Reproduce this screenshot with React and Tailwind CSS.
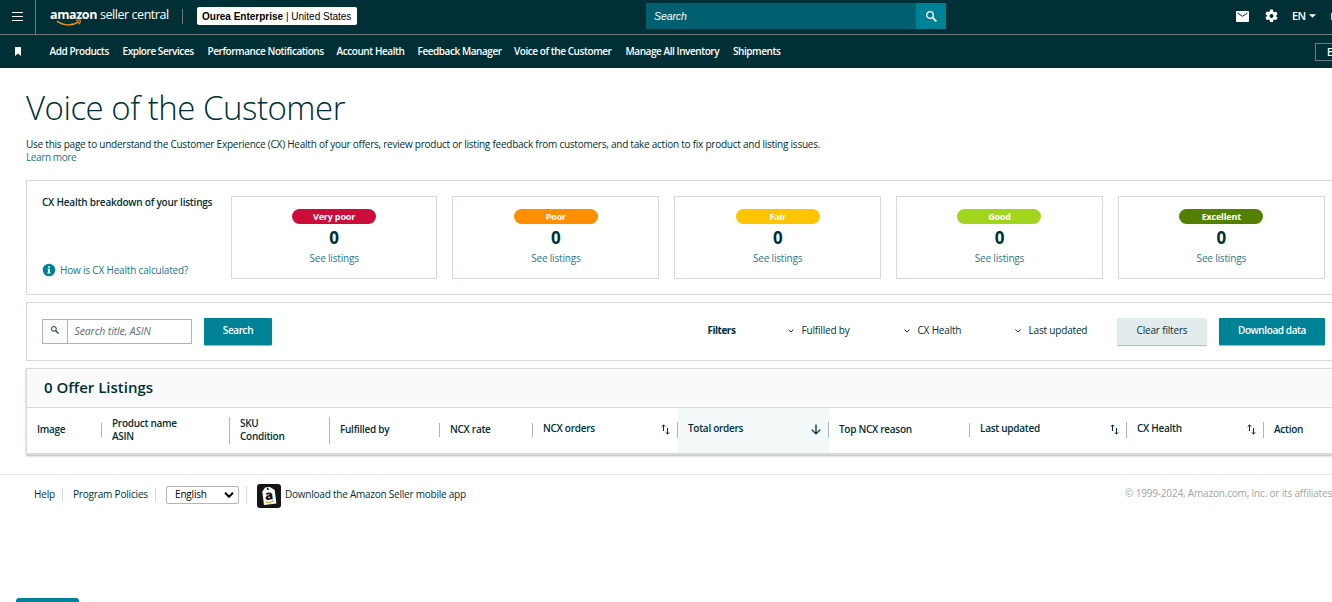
import clsx from 'clsx';

const NAV_ITEMS = [
  { label: 'Add Products', width: 'w-[60px]' },
  { label: 'Explore Services', width: 'w-[72px]' },
  { label: 'Performance Notifications', width: 'w-[116px]' },
  { label: 'Account Health', width: 'w-[68px]' },
  { label: 'Feedback Manager', width: 'w-[83.5px]' },
  { label: 'Voice of the Customer', width: 'w-[98.5px]' },
  { label: 'Manage All Inventory', width: 'w-[94.5px]' },
  { label: 'Shipments', width: 'w-[48px]' },
];

const HEALTH = [
  { label: 'Very poor', color: 'bg-[#cc0c39]' },
  { label: 'Poor', color: 'bg-[#ff8f00]' },
  { label: 'Fair', color: 'bg-[#ffc400]' },
  { label: 'Good', color: 'bg-[#a2d61e]' },
  { label: 'Excellent', color: 'bg-[#538000]' },
];

const COLUMNS = [
  { lines: ['Image'], width: 'w-[75px]' },
  { lines: ['Product name', 'ASIN'], width: 'w-[128px]' },
  { lines: ['SKU', 'Condition'], width: 'w-[100px]' },
  { lines: ['Fulfilled by'], width: 'w-[110px]' },
  { lines: ['NCX rate'], width: 'w-[93px]' },
  { lines: ['NCX orders'], width: 'w-[145px]', sort: 'both' },
  { lines: ['Total orders'], width: 'w-[151px]', sort: 'down' },
  { lines: ['Top NCX reason'], width: 'w-[141px]' },
  { lines: ['Last updated'], width: 'w-[157px]', sort: 'both' },
  { lines: ['CX Health'], width: 'w-[137px]', sort: 'both' },
  { lines: ['Action'], width: 'w-[77px]' },
];

export default function App() {
  return (
    <div className="h-[602px] w-[1332px] overflow-hidden bg-white font-['Open_Sans',sans-serif] text-[10px] tracking-[-0.18px] text-[#002f36]">
      <TopBar />
      <NavBar />
      <main className="w-[1341px] pl-[26px]">
        <h1 className="pt-[18px] text-[33px] leading-[44px] font-light tracking-[-0.48px] whitespace-nowrap">
          Voice of the Customer
        </h1>
        <p className="mt-[8px] leading-[13px] tracking-[-0.24px] whitespace-nowrap">
          Use this page to understand the Customer Experience (CX) Health of your offers, review product or listing
          feedback from customers, and take action to fix product and listing issues.
        </p>
        <a className="block leading-[13px] tracking-[-0.4px] text-[#1c7686]">Learn more</a>
        <HealthPanel />
        <FilterPanel />
        <ListingsTable />
      </main>
      <Footer />
    </div>
  );
}

function TopBar() {
  return (
    <header className="flex h-[35px] border-b border-[#6c7c80] bg-[#002f36] text-white">
      <div className="flex w-9 shrink-0 items-center border-r border-[#6c7c80] pb-px pl-3">
        <svg width="11" height="9" viewBox="0 0 11 9" stroke="currentColor" strokeWidth="1">
          <path d="M0 .5h11M0 4.5h11M0 8.5h11" />
        </svg>
      </div>
      <div className="relative ml-[14px] h-full w-[132px] shrink-0 whitespace-nowrap">
        <span className="text-[12.5px] leading-[29px] font-bold tracking-[-0.4px]">amazon</span>
        <span className="ml-[3px] text-[12.5px] leading-[29px] font-normal tracking-[-0.45px]">seller central</span>
        <svg className="absolute top-[19px] left-[6px]" width="26" height="8" viewBox="0 0 26 8" fill="none" stroke="#f19220">
          <path d="M1 2.2C7 6.8 16 7.2 23 2.8" strokeWidth="1.5" />
          <path d="M20 1.6c2-.6 4-.6 4.3 0 .2.7-.4 2.4-1.5 3.7" strokeWidth="1.1" />
        </svg>
      </div>
      <div className="mt-[9px] h-[15px] w-px shrink-0 bg-[#6c7c80]" />
      <div className="mt-[7px] ml-[14px] h-[18px] w-[160px] shrink-0 rounded-[2px] bg-white pl-[5px] font-['Liberation_Sans',sans-serif] text-[10px] leading-[19px] tracking-normal whitespace-nowrap text-black">
        <b>Ourea Enterprise</b> | United States
      </div>
      <div className="mt-[3px] ml-[289px] flex h-[26px] w-[300px] shrink-0">
        <div className="flex-1 bg-[#00606f] pl-2 font-['Liberation_Sans',sans-serif] text-[10.5px] leading-[27px] tracking-[-0.1px] italic">
          Search
        </div>
        <div className="flex w-[30px] items-center justify-center bg-[#008296]">
          <SearchIcon size={11} />
        </div>
      </div>
      <div className="ml-[290px] flex h-8 shrink-0 items-center">
        <svg width="13" height="11" viewBox="0 0 13 11" fill="none">
          <rect width="13" height="11" rx="1" fill="#fff" />
          <path d="M1.5 2l5 3.3 5-3.3" stroke="#002f36" />
        </svg>
        <svg className="ml-4" width="13" height="14" viewBox="2 2 20 20" fill="currentColor">
          <path d="M19.14 12.94c.04-.3.06-.61.06-.94s-.02-.64-.07-.94l2.03-1.58a.5.5 0 0 0 .12-.61l-1.92-3.32a.49.49 0 0 0-.59-.22l-2.39.96a7 7 0 0 0-1.62-.94l-.36-2.54A.48.48 0 0 0 13.92 2h-3.84a.48.48 0 0 0-.47.41l-.36 2.54c-.59.24-1.13.57-1.62.94l-2.39-.96a.48.48 0 0 0-.59.22L2.74 8.47a.48.48 0 0 0 .12.61l2.03 1.58c-.05.3-.09.63-.09.94s.02.64.07.94l-2.03 1.58a.5.5 0 0 0-.12.61l1.92 3.32c.12.22.37.29.59.22l2.39-.96c.5.38 1.03.7 1.62.94l.36 2.54c.05.24.24.41.48.41h3.84c.24 0 .44-.17.47-.41l.36-2.54a6.6 6.6 0 0 0 1.62-.94l2.39.96c.22.08.47 0 .59-.22l1.92-3.32a.48.48 0 0 0-.12-.61zM12 15a3 3 0 1 1 0-6 3 3 0 0 1 0 6z" />
        </svg>
        <span className="ml-[14px] w-[14px] pt-px text-[11px] font-semibold tracking-[-0.6px]">EN</span>
        <svg className="ml-[3px]" width="7" height="4" viewBox="0 0 6 3" fill="currentColor">
          <path d="M0 0h6L3 3z" />
        </svg>
        <div className="ml-[15px] h-[7px] w-[2px] shrink-0 bg-[#8fe1f0]" />
      </div>
    </header>
  );
}

function NavBar() {
  return (
    <nav className="flex h-[33px] items-center bg-[#002f36] text-[10px] font-semibold text-white">
      <svg className="ml-[15px]" width="6" height="9" viewBox="0 0 6 9" fill="currentColor">
        <path d="M0 0h6v9L3 6.6 0 9z" />
      </svg>
      <div className="ml-[28.5px] flex gap-[13px]">
        {NAV_ITEMS.map(({ label, width }) => (
          <span key={label} className={clsx('tracking-[-0.44px] whitespace-nowrap', width)}>
            {label}
          </span>
        ))}
      </div>
      <div className="ml-auto h-[18px] w-[17px] overflow-hidden border border-r-0 border-[#6c7c80] pl-[11px] leading-4">
        E
      </div>
    </nav>
  );
}

function SearchIcon({ size }) {
  return (
    <svg width={size} height={size} viewBox="0 0 11 11" fill="none" stroke="currentColor">
      <circle cx="4" cy="4" r="3.3" strokeWidth="1.3" />
      <path d="M6.4 6.4l4 4" strokeWidth="1.6" />
    </svg>
  );
}

function HealthPanel() {
  return (
    <section className="mt-4 flex h-[115px] border border-[#d5dbdb] pt-[15px] pl-[15px]">
      <div className="flex h-[83px] w-[188.7px] shrink-0 flex-col justify-between">
        <span className="leading-[13px] font-semibold tracking-[-0.22px] whitespace-nowrap">
          CX Health breakdown of your listings
        </span>
        <div className="flex h-[18px] items-center text-[#1c7686]">
          <svg width="14" height="14" viewBox="0 0 14 14">
            <circle cx="7" cy="7" r="6.3" fill="#008296" />
            <path d="M6.1 3.2h1.8v1.6H6.1zM5.5 5.8h2.4v3.6h.7v1H5.4v-1h.7V6.8h-.6z" fill="#fff" />
          </svg>
          <span className="ml-1 tracking-[-0.18px] whitespace-nowrap">How is CX Health calculated?</span>
        </div>
      </div>
      <div className="flex shrink-0 gap-[15px]">
        {HEALTH.map(({ label, color }) => (
          <div key={label} className="flex h-[83px] w-[206.8px] flex-col items-center border border-[#d5dbdb] pt-3">
            <span className={clsx('h-[15px] w-[84px] rounded-full text-center text-[9px] leading-[15px] font-bold text-white', color)}>
              {label}
            </span>
            <span className="mt-[3px] text-[17px] leading-[22px] font-bold">0</span>
            <a className="mt-[3px] leading-[13px] text-[#2b7a8c]">See listings</a>
          </div>
        ))}
      </div>
    </section>
  );
}

function FilterPanel() {
  return (
    <section className="mt-[7px] flex h-[59px] border border-[#d5dbdb] pt-[15px] pl-[15px]">
      <div className="mt-px flex h-[25px] w-[150px] border border-[#aab7b8]">
        <div className="flex w-[25px] items-center justify-center border-r border-[#aab7b8] bg-[#fafafa] pr-px pb-1">
          <SearchIcon size={8} />
        </div>
        <span className="pl-[6.5px] text-[10.5px] leading-[23px] tracking-[-0.12px] text-[#5a6b70] italic">
          Search title, ASIN
        </span>
      </div>
      <button className="ml-3 h-[27px] w-[68px] rounded-[1px] bg-[#008296] pb-[2px] font-semibold tracking-[-0.4px] text-white shadow-[0_1px_1px_#9fb4b8]">
        Search
      </button>
      <div className="ml-[435px] flex h-[25px] items-center whitespace-nowrap">
        <span className="w-[81px] pl-[0.5px] font-bold tracking-[-0.5px]">Filters</span>
        <Filter label="Fulfilled by" width="w-[116px]" />
        <Filter label="CX Health" width="w-[111px]" />
        <Filter label="Last updated" width="w-[102px]" />
      </div>
      <button className="h-[27px] w-[90px] rounded-[1px] bg-[#e3eced] pb-[2px] shadow-[0_1px_1px_#aab7b8]">
        Clear filters
      </button>
      <button className="ml-3 h-[27px] w-[106px] rounded-[1px] bg-[#008296] pb-[2px] font-semibold tracking-[-0.4px] text-white shadow-[0_1px_1px_#9fb4b8]">
        Download data
      </button>
    </section>
  );
}

function Filter({ label, width }) {
  return (
    <div className={clsx('flex items-center', width)}>
      <svg width="6" height="4" viewBox="0 0 6 4" fill="none" stroke="currentColor">
        <path d="M.4.5L3 3.1 5.6.5" />
      </svg>
      <span className="ml-[7.5px]">{label}</span>
    </div>
  );
}

function ListingsTable() {
  return (
    <section className="mt-[7px] h-[87px] border border-[#d5dbdb] border-b-2 shadow-[0_1px_2px_#aab7b8]">
      <h2 className="h-[39px] border-b border-[#d5dbdb] bg-[#fafafa] pl-[17px] text-[15px] leading-[36px] font-semibold tracking-normal">
        0 Offer Listings
      </h2>
      <div className="flex h-[45px] font-semibold">
        {COLUMNS.map(({ lines, width, sort }) => (
          <div
            key={lines[0]}
            className={clsx('flex shrink-0 items-center pl-[10px]', width, sort === 'down' && 'bg-[#f3f8f9]')}
          >
            <div
              className={clsx('flex-1 leading-[13px] tracking-[-0.28px] whitespace-nowrap', sort ? 'pb-[4px]' : 'pb-[2px]')}
            >
              {lines.map((line) => (
                <div key={line}>{line}</div>
              ))}
            </div>
            {sort === 'both' && <SortIcon />}
            {sort === 'down' && <DownIcon />}
            {lines[0] !== 'Action' && (
              <div
                className={clsx('mb-px w-px bg-[#aab7b8]', lines.length > 1 ? 'h-[27px]' : sort ? 'h-4' : 'h-[14px]')}
              />
            )}
          </div>
        ))}
      </div>
    </section>
  );
}

function SortIcon() {
  return (
    <svg className="mr-[7px] mb-[2px]" width="9" height="11" viewBox="0 0 9 11" fill="none" stroke="currentColor">
      <path d="M2.5 7V1M.7 2.7L2.5.9l1.8 1.8M6.5 4v6M4.7 8.3l1.8 1.8 1.8-1.8" />
    </svg>
  );
}

function DownIcon() {
  return (
    <svg className="mr-[7px] mb-[2px]" width="10" height="11" viewBox="0 0 10 11" fill="none" stroke="currentColor" strokeWidth="1.3">
      <path d="M5 .5v9.3M.7 5.6L5 9.9l4.3-4.3" />
    </svg>
  );
}

function Footer() {
  return (
    <footer className="mt-[19px] h-[128px] border-t border-[#e7e9e9]">
      <div className="flex h-10 w-[1332px] items-center whitespace-nowrap *:shrink-0">
        <span className="ml-[34px] w-7 pb-px">Help</span>
        <div className="h-[14px] w-px bg-[#d5dbdb]" />
        <span className="ml-[10px] w-[82px] pb-px">Program Policies</span>
        <div className="h-[14px] w-px bg-[#d5dbdb]" />
        <div className="ml-[10px] flex h-[18px] w-[73px] items-center justify-between rounded-[2px] border border-[#b5b5b5] pr-1 pb-px pl-2 text-black">
          English
          <svg width="10" height="6" viewBox="0 0 10 6" fill="none" stroke="currentColor" strokeWidth="2">
            <path d="M1 .8l4 4 4-4" />
          </svg>
        </div>
        <div className="ml-[7px] h-[18px] w-px bg-[#d5dbdb]" />
        <svg className="mt-px ml-[10px]" width="24" height="24" viewBox="0 0 24 24">
          <rect width="24" height="24" rx="3" fill="#151515" />
          <g transform="rotate(-7 12 12)">
            <path d="M9.2 3.2h4.8l4.4 3.6v13.6H5.9V6.8z" fill="#fff" />
            <circle cx="11.6" cy="5" r="1" fill="#151515" />
            <text x="12.1" y="15.8" textAnchor="middle" fontSize="13" fontWeight="800" letterSpacing="0" fill="#151515">
              a
            </text>
            <path d="M7.8 17.3q4.2 2.2 8.6 0" stroke="#f19220" fill="none" />
          </g>
        </svg>
        <span className="ml-1 pb-px tracking-[-0.23px]">Download the Amazon Seller mobile app</span>
        <span className="ml-auto pb-1 text-[#a3a3a3]">© 1999-2024, Amazon.com, Inc. or its affiliates</span>
      </div>
      <div className="mt-[83px] ml-4 h-[5px] w-[63px] rounded-t-[3px] bg-[#008296]" />
    </footer>
  );
}
